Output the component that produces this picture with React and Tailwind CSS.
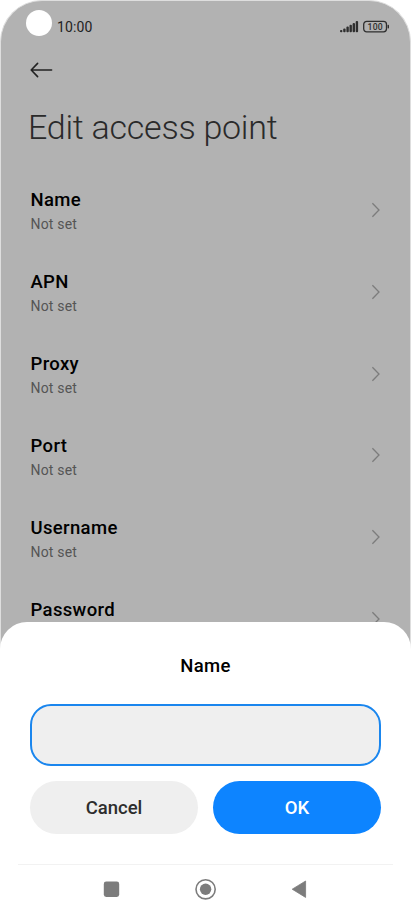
const fields = ["Name", "APN", "Proxy", "Port", "Username", "Password"];

function StatusBar() {
  return (
    <div className="flex h-[49px] shrink-0 items-start pl-[25px] pr-[20px]">
      <span className="mt-[9px] h-[26px] w-[26px] rounded-full bg-white" />
      <span className="ml-[5px] mt-[16px] text-[14px] leading-[20px] tracking-[0.1px] text-[#222]">
        10:00
      </span>
      <svg
        className="ml-auto mt-[19px]"
        width="19"
        height="14"
        viewBox="0 0 19 14"
        fill="#2e2e2e"
      >
        <rect x="0" y="10" width="2.4" height="2.3" rx="1" />
        <rect x="3.2" y="8.4" width="2.4" height="3.9" rx="1" />
        <rect x="6.4" y="6.6" width="2.4" height="5.7" rx="1" />
        <rect x="9.5" y="4.8" width="2.4" height="7.5" rx="1" />
        <rect x="12.6" y="3" width="2.4" height="9.3" rx="1" />
        <rect x="15.7" y="1" width="2.4" height="11.3" rx="1" />
      </svg>
      <svg
        className="ml-[4px] mt-[19px]"
        width="27"
        height="14"
        viewBox="0 0 27 14"
      >
        <rect
          x="0.7"
          y="1.4"
          width="22.8"
          height="10.4"
          rx="3"
          fill="none"
          stroke="#2e2e2e"
          strokeWidth="1.3"
        />
        <rect x="24.6" y="4.8" width="1.4" height="3.6" rx="0.7" fill="#2e2e2e" />
        <text
          x="12.1"
          y="9.6"
          textAnchor="middle"
          fontSize="8.6"
          fontWeight="500"
          textLength="15"
          fill="#2e2e2e"
        >
          100
        </text>
      </svg>
    </div>
  );
}

function FieldRow({ label }) {
  return (
    <div className="flex h-[81.85px] shrink-0 items-center justify-between pl-[29.5px] pr-[29px]">
      <div className="mt-[5px]">
        <div className="text-[18.5px] font-medium leading-[24px] tracking-[0.35px] text-black">
          {label}
        </div>
        <div className="text-[14px] leading-[24px] tracking-[0.2px] text-[#555]">
          Not set
        </div>
      </div>
      <svg
        width="10"
        height="16"
        viewBox="0 0 10 16"
        fill="none"
        stroke="#7c7c7c"
        strokeWidth="1.3"
      >
        <path d="M1.4 1.2 8 8 1.4 14.8" />
      </svg>
    </div>
  );
}

function NameSheet() {
  return (
    <div className="absolute -inset-x-px bottom-0 flex h-[292px] flex-col rounded-t-[27px] bg-white">
      <h2 className="mt-[32px] text-center text-[18.5px] font-medium leading-[24px] tracking-[0.3px] text-black">
        Name
      </h2>
      <input
        aria-label="Name"
        className="mx-[30px] mt-[26px] h-[62px] rounded-[21px] border-2 border-[#1a86ee] bg-[#efefef] px-4 text-[18px] outline-none"
      />
      <div className="mx-[30px] mt-[15px] flex h-[53px] gap-[15px] text-[18.5px] font-medium">
        <button className="flex-1 rounded-full bg-[#efefef] pt-[2px] text-[#2d2d2d]">
          Cancel
        </button>
        <button className="flex-1 rounded-full bg-[#0d84ff] pt-[2px] text-white">
          OK
        </button>
      </div>
      <NavBar />
    </div>
  );
}

function NavBar() {
  return (
    <div className="mx-[18px] mt-[30px] flex h-[50px] items-start justify-center border-t border-[#f2f2f2] pt-3">
      <svg width="212" height="24" viewBox="0 0 212 24" fill="#7c7c7c">
        <rect x="3.8" y="4.5" width="15.4" height="15.4" rx="2.4" />
        <circle cx="105.6" cy="12.3" r="5.7" />
        <circle
          cx="105.6"
          cy="12.3"
          r="9.6"
          fill="none"
          stroke="#7c7c7c"
          strokeWidth="1.6"
        />
        <path
          d="M192.2 12.2 205.6 4V20.4Z"
          stroke="#7c7c7c"
          strokeWidth="0.8"
          strokeLinejoin="round"
        />
      </svg>
    </div>
  );
}

export default function App() {
  return (
    <div className="h-[914px] w-[411px] overflow-hidden bg-white font-['Roboto',sans-serif]">
      <div className="relative flex h-full flex-col rounded-t-[42px] border-x border-t border-[#dedede] bg-[#b2b2b2]">
        <StatusBar />
        <div className="flex h-[40px] shrink-0 items-center pl-[29px]">
          <svg
            width="23"
            height="16"
            viewBox="0 0 23 16"
            fill="none"
            stroke="#222"
            strokeWidth="1.6"
            strokeLinecap="round"
            strokeLinejoin="round"
          >
            <path d="M21.6 8H1.5M7.6 1.4 1.2 8 7.6 14.6" />
          </svg>
        </div>
        <h1 className="mt-[15px] h-[64px] shrink-0 pl-[27px] text-[34px] font-light leading-[44px] tracking-[-0.25px] text-[#2a2a2a]">
          Edit access point
        </h1>
        {fields.map((label) => (
          <FieldRow key={label} label={label} />
        ))}
        <NameSheet />
      </div>
    </div>
  );
}
